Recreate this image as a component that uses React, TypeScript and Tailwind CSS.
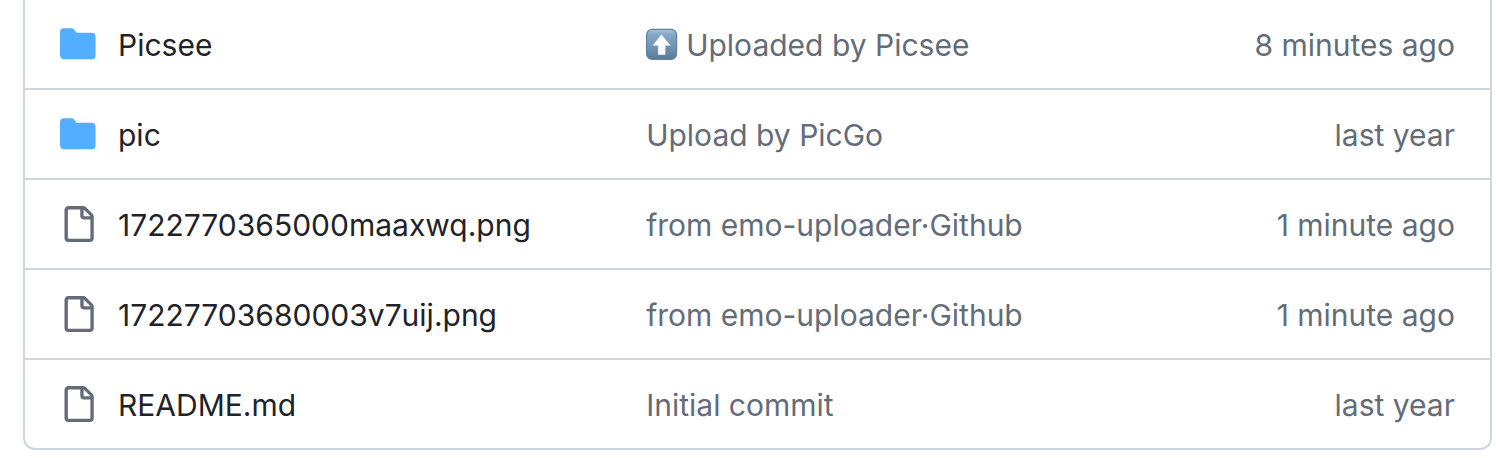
import React from "react";

type Entry = { kind: "folder" | "file"; name: string; message: string; uploaded?: boolean; age: string };

const entries: Entry[] = [
  { kind: "folder", name: "Picsee", message: "Uploaded by Picsee", uploaded: true, age: "8 minutes ago" },
  { kind: "folder", name: "pic", message: "Upload by PicGo", age: "last year" },
  { kind: "file", name: "1722770365000maaxwq.png", message: "from emo-uploader·Github", age: "1 minute ago" },
  { kind: "file", name: "17227703680003v7uij.png", message: "from emo-uploader·Github", age: "1 minute ago" },
  { kind: "file", name: "README.md", message: "Initial commit", age: "last year" },
];

function FolderIcon() {
  return (
    <svg viewBox="0 0 16 16" className="size-9 shrink-0 fill-[#54aeff]" aria-hidden="true">
      <path d="M1.75 1A1.75 1.75 0 0 0 0 2.75v10.3C0 14.016.684 14.8 1.65 14.8h12.5A1.7 1.7 0 0 0 15.8 13.1V4.75A1.75 1.75 0 0 0 14.1 3H7.5a.25.25 0 0 1-.2-.1l-.9-1.2C6.07 1.26 5.55 1 5 1H1.75Z" />
    </svg>
  );
}

function FileIcon() {
  return (
    <svg viewBox="0 0 16 16" className="size-9 shrink-0 fill-[#636c78]" aria-hidden="true">
      <path d="M2 1.75C2 .784 2.784 0 3.75 0h6.586c.464 0 .909.184 1.237.513l2.914 2.914c.329.328.513.773.513 1.237v9.586A1.75 1.75 0 0 1 13.25 16h-9.5A1.75 1.75 0 0 1 2 14.25Zm1.75-.25a.25.25 0 0 0-.25.25v12.5c0 .138.112.25.25.25h9.5a.25.25 0 0 0 .25-.25V6h-2.75A1.75 1.75 0 0 1 9 4.25V1.5Zm6.75.062V4.25c0 .138.112.25.25.25h2.688l-.011-.013-2.914-2.914-.013-.011Z" />
    </svg>
  );
}

function UploadBadge() {
  return (
    <svg viewBox="0 0 32 32" className="size-8 shrink-0" aria-hidden="true">
      <defs>
        <linearGradient id="badge-face" x1="0" y1="0" x2="0" y2="1">
          <stop offset="0" stopColor="#a9c6dc" />
          <stop offset="0.16" stopColor="#85a8c9" />
          <stop offset="0.55" stopColor="#7396b8" />
          <stop offset="1" stopColor="#587a98" />
        </linearGradient>
      </defs>
      <rect x="0.6" y="1.4" width="30" height="30" rx="5.5" fill="url(#badge-face)" stroke="#5f829f" strokeWidth="1.2" />
      <path d="M15.5 6.8 23.9 17.2h-4.8v9.4h-6.8v-9.4H7.1z" fill="#fff" stroke="#fff" strokeWidth="0.5" strokeLinejoin="round" />
    </svg>
  );
}

export default function App() {
  return (
    <main className="bg-white pr-1 pb-2 pl-[23px] font-['Inter',sans-serif] text-[30px] leading-10 text-[#1f2328]">
      <table className="w-full table-fixed border-separate border-spacing-0 rounded-b-xl border-2 border-t-0 border-[#d0d6df]">
        <tbody>
          {entries.map((e, i) => {
            const last = i === entries.length - 1;
            const line = last ? "" : "border-b-2 border-[#d0d6df]";
            return (
              <tr key={e.name} className={last ? "h-[88px]" : "h-[90px]"}>
                <td className={`w-[42.4%] p-0 pl-[35px] ${line}`}>
                  <div className="flex items-center gap-[22px]">
                    {e.kind === "folder" ? <FolderIcon /> : <FileIcon />}
                    <a href="#" className="pt-0.5">{e.name}</a>
                  </div>
                </td>
                <td className={`p-0 text-[#636c78] ${line}`}>
                  <a href="#" className="flex items-center gap-2">
                    {e.uploaded && <UploadBadge />}
                    <span className="pt-0.5">{e.message}</span>
                  </a>
                </td>
                <td className={`w-[22%] p-0 pt-0.5 pr-[35px] text-right text-[#636c78] ${line}`}>{e.age}</td>
              </tr>
            );
          })}
        </tbody>
      </table>
    </main>
  );
}
